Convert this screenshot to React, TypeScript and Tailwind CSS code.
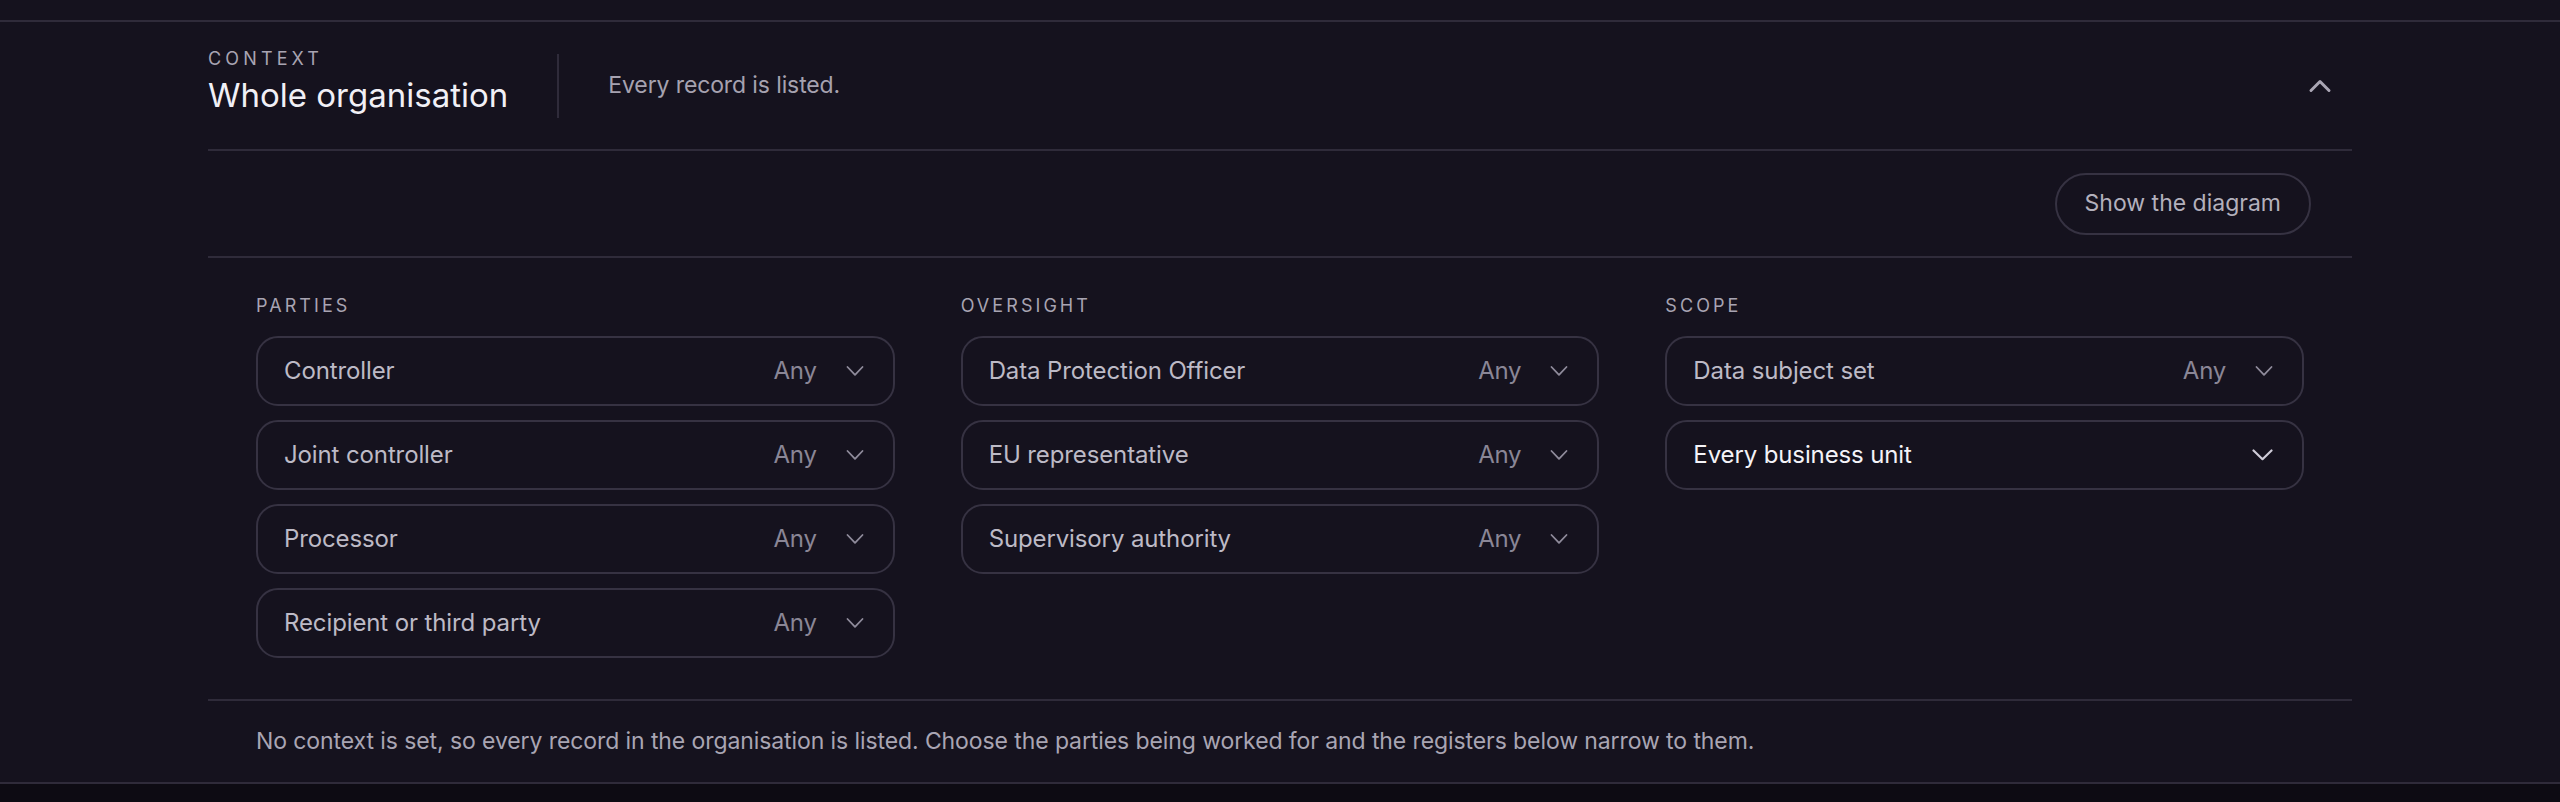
import React from "react";

type Filter = {
  label: string;
  value?: string;
  active?: boolean;
};

const groups: { title: string; items: Filter[] }[] = [
  {
    title: "Parties",
    items: [
      { label: "Controller", value: "Any" },
      { label: "Joint controller", value: "Any" },
      { label: "Processor", value: "Any" },
      { label: "Recipient or third party", value: "Any" },
    ],
  },
  {
    title: "Oversight",
    items: [
      { label: "Data Protection Officer", value: "Any" },
      { label: "EU representative", value: "Any" },
      { label: "Supervisory authority", value: "Any" },
    ],
  },
  {
    title: "Scope",
    items: [
      { label: "Data subject set", value: "Any" },
      { label: "Every business unit", active: true },
    ],
  },
];

const ChevronDown = ({ bright }: { bright?: boolean }) =>
  bright ? (
    <svg width="21" height="12" viewBox="0 0 21 12" fill="none" className="shrink-0">
      <path d="M1.5 1.5 10.5 10.2 19.5 1.5" stroke="#cfccd8" strokeWidth="2.2" strokeLinecap="round" strokeLinejoin="round" />
    </svg>
  ) : (
    <svg width="18" height="12" viewBox="0 0 18 12" fill="none" className="shrink-0">
      <path d="M1.5 2 9 9.8 16.5 2" stroke="#8f8b9b" strokeWidth="1.8" strokeLinecap="round" strokeLinejoin="round" />
    </svg>
  );

const FilterSelect = ({ item }: { item: Filter }) => (
  <button className="flex h-[70px] w-full items-center rounded-[22px] border-2 border-[#363242] pl-[26px] pr-[29px] text-left">
    <span
      className={
        item.active
          ? "flex-1 text-[24px] tracking-[-0.005em] text-[#f4f3f8]"
          : "flex-1 text-[24px] tracking-[-0.005em] text-[#bdbac6]"
      }
    >
      {item.label}
    </span>
    {item.value && (
      <span className="mr-[29px] text-[24px] tracking-[-0.01em] text-[#8a8696]">{item.value}</span>
    )}
    <ChevronDown bright={item.active} />
  </button>
);

export default function App() {
  return (
    <div className="min-h-screen bg-[#0d0b13] font-['Inter','Noto_Sans',sans-serif]">
      <div className="bg-[#15121e] pt-5">
        <section className="border-y-2 border-[#2f2b3a]">
          <div className="mx-auto w-[2144px]">
            {/* header */}
            <div className="flex h-[129px] items-center border-b-2 border-[#2f2b3a]">
              <div className="pb-[9px]">
                <div className="text-[18px] leading-[24px] tracking-[0.23em] text-[#a8a4b2]">CONTEXT</div>
                <h2 className="mt-1 text-[33px] leading-[40px] text-[#f1f0f6]">Whole organisation</h2>
              </div>
              <div className="mx-[49px] h-[64px] w-[2px] bg-[#2f2b3a]" />
              <p className="flex-1 text-[23px] tracking-[-0.005em] text-[#a6a2b0]">Every record is listed.</p>
              <svg width="36" height="36" viewBox="0 0 24 24" fill="none" className="mr-[14px]">
                <path d="m18 15-6-6-6 6" stroke="#aaa6b4" strokeWidth="2" strokeLinecap="round" strokeLinejoin="round" />
              </svg>
            </div>

            {/* diagram toggle */}
            <div className="flex h-[107px] items-center justify-end border-b-2 border-[#2f2b3a] pr-[41px]">
              <button className="h-[62px] rounded-full border-2 border-[#363242] px-[28px] text-[23px] text-[#b3b0bc]">
                Show the diagram
              </button>
            </div>

            {/* filters */}
            <div className="grid grid-cols-3 gap-x-[66px] border-b-2 border-[#2f2b3a] px-12 pt-[36px] pb-[41px]">
              {groups.map((g) => (
                <div key={g.title}>
                  <div className="mb-[18px] text-[18px] uppercase leading-[24px] tracking-[0.17em] text-[#a8a4b2]">
                    {g.title}
                  </div>
                  <div className="flex flex-col gap-[14px]">
                    {g.items.map((item) => (
                      <FilterSelect key={item.label} item={item} />
                    ))}
                  </div>
                </div>
              ))}
            </div>

            {/* note */}
            <div className="flex h-[81px] items-center px-12">
              <p className="text-[23px] tracking-[-0.004em] text-[#a9a5b3]">
                No context is set, so every record in the organisation is listed. Choose the parties being worked for and
                the registers below narrow to them.
              </p>
            </div>
          </div>
        </section>
      </div>
    </div>
  );
}
